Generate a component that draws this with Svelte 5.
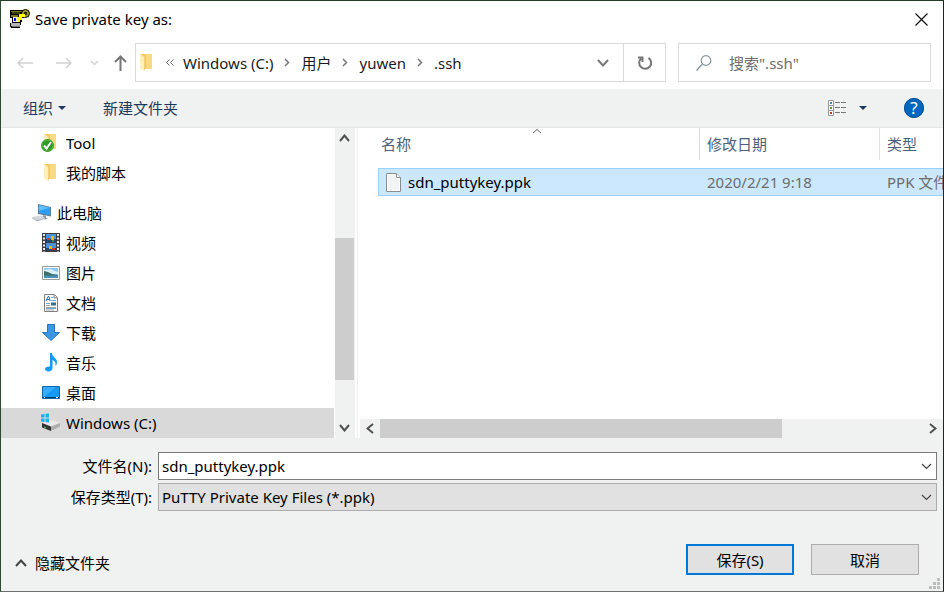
<script>
  const places = [
    { name: 'Tool', icon: 'synced', level: 1 },
    { name: '我的脚本', icon: 'folder', level: 1 },
    { name: '此电脑', icon: 'pc', level: 0 },
    { name: '视频', icon: 'video', level: 1 },
    { name: '图片', icon: 'picture', level: 1 },
    { name: '文档', icon: 'document', level: 1 },
    { name: '下载', icon: 'download', level: 1 },
    { name: '音乐', icon: 'music', level: 1 },
    { name: '桌面', icon: 'desktop', level: 1 },
    { name: 'Windows (C:)', icon: 'drive', level: 1 }
  ];
  const crumbs = ['Windows (C:)', '用户', 'yuwen', '.ssh'];
  const files = [{ name: 'sdn_puttykey.ppk', date: '2020/2/21 9:18', type: 'PPK 文件' }];

  let place = $state('Windows (C:)');
  let fileName = $state('sdn_puttykey.ppk');
</script>

{#snippet chevron(dir, w, h, sw)}
  <svg width={w} height={h} viewBox="0 0 {w} {h}" fill="none" stroke="currentColor" stroke-width={sw} aria-hidden="true">
    {#if dir === 'down'}<path d="M1 1L{w / 2} {h - 1.5}L{w - 1} 1" />
    {:else if dir === 'up'}<path d="M1 {h - 1}L{w / 2} 1.5L{w - 1} {h - 1}" />
    {:else if dir === 'left'}<path d="M{w - 1} 1L1.5 {h / 2}L{w - 1} {h - 1}" />
    {:else}<path d="M1 1L{w - 1.5} {h / 2}L1 {h - 1}" />{/if}
  </svg>
{/snippet}

{#snippet folderShape()}
  <path d="M4 1h11v15H6z" fill="#f3cb66" />
  <path d="M9 1h6v15H9z" fill="#f8da85" />
  <path d="M3 1l4 2.500V18l-4-2z" fill="#fff0bd" />
  <path d="M3 1h1.500L8 3.500V16.500L7 18V4z" fill="#f2cf7c" />
{/snippet}

{#snippet icon(kind)}
  <svg class="icon" width="20" height="20" viewBox="0 0 20 20" aria-hidden="true">
    {#if kind === 'folder'}
      {@render folderShape()}
    {:else if kind === 'synced'}
      {@render folderShape()}
      <circle cx="6.500" cy="12.500" r="6.500" fill="#2f9a26" />
      <circle cx="6.500" cy="12.500" r="5.500" fill="none" stroke="#55b845" />
      <path d="M3 12.500l2.500 3L10 9" fill="none" stroke="#fff" stroke-width="2" />
    {:else if kind === 'pc'}
      <path d="M6 1l13 3v9.500L6 11z" fill="#5b7f9c" />
      <path d="M7 2.300l11 2.500v7.400L7 9.800z" fill="#2a9df4" />
      <path d="M7 2.300l11 2.500-11 3z" fill="#5fc0ff" />
      <path d="M11 12l3 .7v2l2 .8-3 1-3-1z" fill="#8c9aa5" />
      <path d="M0 14l9-1.500 4 2.500-8 3z" fill="#d3d9de" />
      <path d="M0 14l5 3 8-2v.8L5 18.500 0 15z" fill="#aeb7bf" />
    {:else if kind === 'video'}
      <path d="M1 0h18v19H1z" fill="#3d3d3d" />
      <path d="M5 1h10v8H5zM5 10h10v8H5z" fill="#4d91d8" />
      <path d="M5 6h10v3H5zM5 15h10v3H5z" fill="#24476d" />
      <path d="M10 3h3v4h-3zM8 13h3v3H8z" fill="#e8b62c" />
      <path d="M6 5h3v2H6zM11 15h3v2h-3z" fill="#c7392e" />
      <path d="M11 7h2v2h-2z" fill="#4e8b36" />
      <path d="M3 1v18M17 1v18" stroke="#eee" stroke-width="2" stroke-dasharray="2 1.500" />
    {:else if kind === 'picture'}
      <path d="M1.500 3.500h17v13h-17z" fill="#fff" stroke="#9a9a9a" />
      <path d="M3 5h14v10H3z" fill="#8fc6ee" />
      <path d="M3 7l6-1 8 3v2H3z" fill="#dceffb" />
      <path d="M3 8l4 1 4 2 6 1v1H3z" fill="#3d7165" />
      <path d="M3 12.500h14V15H3z" fill="#4b91b7" />
    {:else if kind === 'document'}
      <path d="M3.500 1.500h10l3 3v14h-13z" fill="#fff" stroke="#808080" />
      <path d="M13 2v3h3" fill="#e8e8e8" stroke="#808080" />
      <path d="M5 8l2-4.500h1L9 8M6 6.500h3" fill="none" stroke="#1f78c8" />
      <path d="M10 4.500h2M10 7.500h5M5 10.500h4M5 15.500h10" stroke="#62a9de" />
      <path d="M5 12.500h4M5 14.500h10M5 17h8" stroke="#a5a5a5" />
      <path d="M10 9.500h5v3h-5z" fill="#36718b" />
    {:else if kind === 'download'}
      <path d="M6.500 1.500h7v8h5L10 17.500l-8.500-8h5z" fill="#3b97e3" stroke="#2675bd" />
    {:else if kind === 'music'}
      <path d="M9 0h2c0 4 5 5 5 9 0 2-1 4-1.500 4 .5-4-1-5-3-6v8c0 2-2 3.500-4 3.500S4 17.500 4 16s2-3 5-2.500z" fill="#189bf2" />
    {:else if kind === 'desktop'}
      <path d="M1.500 3.500h17v12h-17z" fill="#149bf5" stroke="#0b66ad" />
      <path d="M2 4h13L4 13H2z" fill="#37adff" />
      <path d="M2 14.500h16" stroke="#0c3a66" />
      <path d="M3 14.500h1M15 14.500h2" stroke="#fff" />
    {:else if kind === 'drive'}
      <path d="M1 10l9-3 9 3-9 4z" fill="#e9e9e9" />
      <path d="M1 10l9 3.500v4.500l-9-3.500z" fill="#343434" />
      <path d="M10 13.500l9-3.500v3.500l-9 4.500z" fill="#aeaeae" />
      <path d="M3 14l2 1" stroke="#60d55a" />
      <path d="M0 1.500l3.500-.5v3.500H0zM4.500.8L8 .4v4.100H4.500zM0 5.500h3.500V9L0 8.500zM4.500 5.500H8v4l-3.500-.4z" fill="#16b4ee" />
    {/if}
  </svg>
{/snippet}

<main class="dialog">
  <header class="title">
    <svg width="21" height="20" viewBox="0 0 21 20" aria-hidden="true">
      <path d="M1 1h14v8h-2v4h-1v3h-1v3H2l-1-2v-3h2V9H1z" fill="#000" />
      <path d="M2 2h11v1H2zM2 6h7v2H2z" fill="#77761b" />
      <path d="M3 3h8v2H3z" fill="#3d3c0b" />
      <path d="M4 8h6v5H4z" fill="#e8e8e8" />
      <path d="M5 9h2v3H5z" fill="#0016e8" />
      <path d="M2 14h9v3H2z" fill="#b5b5b5" />
      <path d="M3 17h8v1H3z" fill="#777" />
      <circle cx="16.500" cy="4.500" r="4" fill="#9b9a22" stroke="#000" />
      <path d="M15 3h3v3h-3z" fill="#29290a" />
      <path d="M10 5h6v3h-3v3h-2v2H9v-3H8V8h2z" fill="#ff0" />
    </svg>
    <h1>Save private key as:</h1>
    <button class="close" aria-label="Close">
      <svg width="13" height="13" viewBox="0 0 13 13" stroke="#111" stroke-width="1.200"><path d="M.5.5l12 12M12.500.5l-12 12" /></svg>
    </button>
  </header>

  <div class="nav">
    <div class="history">
      <button class="dim" aria-label="Back">
        <svg width="16" height="12" viewBox="0 0 16 12" fill="none" stroke="currentColor" stroke-width="1.500"><path d="M6 1L1 6l5 5M1 6h15" /></svg>
      </button>
      <button class="dim" aria-label="Forward">
        <svg width="16" height="12" viewBox="0 0 16 12" fill="none" stroke="currentColor" stroke-width="1.500"><path d="M10 1l5 5-5 5M15 6H0" /></svg>
      </button>
      <button class="dim recent" aria-label="Recent">{@render chevron('down', 9, 6, 1.5)}</button>
      <button class="up" aria-label="Up">
        <svg width="13" height="16" viewBox="0 0 13 16" fill="none" stroke="currentColor" stroke-width="2"><path d="M1 7l5.500-5.500L12 7M6.500 2v14" /></svg>
      </button>
    </div>
    <div class="address">
      <svg class="icon" width="20" height="20" viewBox="0 0 20 20" aria-hidden="true">{@render folderShape()}</svg>
      <button class="more" aria-label="More folders">
        <svg width="8" height="7" viewBox="0 0 8 7" fill="none" stroke="currentColor"><path d="M3.500.5l-3 3 3 3M7.500.5l-3 3 3 3" /></svg>
      </button>
      {#each crumbs as crumb, i}
        {#if i > 0}<span class="sep">{@render chevron('right', 6, 9, 1.5)}</span>{/if}
        <button class="crumb">{crumb}</button>
      {/each}
      <button class="drop" aria-label="Previous locations">{@render chevron('down', 12, 8, 2)}</button>
      <button class="refresh" aria-label="Refresh">
        <svg width="16" height="16" viewBox="0 0 16 16" fill="none" stroke="currentColor" stroke-width="2"><path d="M11.500 2.800A6 6 0 1 1 4 3.500M1 2.500h4.500V7" /></svg>
      </button>
    </div>
    <label class="search">
      <svg width="16" height="16" viewBox="0 0 16 16" fill="none" stroke="#84949a" stroke-width="1.200" aria-hidden="true"><circle cx="10" cy="5.500" r="4.800" /><path d="M6.500 9L.5 15.500" /></svg>
      <input type="search" aria-label="搜索" placeholder={'搜索".ssh"'} />
    </label>
  </div>

  <div class="toolbar">
    <button>组织 <i class="tri"></i></button>
    <button>新建文件夹</button>
    <button class="view" aria-label="View">
      <svg width="18" height="16" viewBox="0 0 18 16" aria-hidden="true">
        <path d="M.5.5h5v15h-5zM.5 5.500h5M.5 10.500h5" fill="#fff" stroke="#999" />
        <path d="M2 2h2v2H2z" fill="#3b86c8" /><path d="M2 7h2v2H2z" fill="#5a9a32" /><path d="M2 12h2v2H2z" fill="#c33a24" />
        <path d="M7 2.500h5M13 2.500h5M7 7.500h5M13 7.500h5M7 12.500h5M13 12.500h5" stroke="#777" />
      </svg>
      <i class="tri"></i>
    </button>
    <button class="help" aria-label="Help">?</button>
  </div>

  <div class="content">
    <aside>
      <ul>
        {#each places as p}
          <li class:root={p.level === 0}>
            <button class:selected={place === p.name} onclick={() => (place = p.name)}>
              {@render icon(p.icon)}<span>{p.name}</span>
            </button>
          </li>
        {/each}
      </ul>
      <div class="vbar">
        <button aria-label="Scroll up">{@render chevron('up', 11, 8, 2)}</button>
        <div class="track"><div class="thumb"></div></div>
        <button aria-label="Scroll down">{@render chevron('down', 11, 8, 2)}</button>
      </div>
    </aside>

    <section>
      <div class="list">
        <table>
          <thead>
            <tr>
              <th class="c-name"><span class="sort">{@render chevron('up', 10, 6, 1)}</span>名称</th>
              <th class="c-date">修改日期</th>
              <th class="c-type">类型</th>
            </tr>
          </thead>
          <tbody>
            {#each files as f}
              <tr>
                <td>
                  <div class="file">
                    <svg width="15" height="19" viewBox="0 0 15 19" aria-hidden="true"><path d="M.5.500h10l4 4v14H.5z" fill="#fff" stroke="#8c8c8c" /><path d="M2 2h8v4h3v11H2z" fill="#f1f3f4" /><path d="M10.500.5v4h4" fill="#fff" stroke="#8c8c8c" /></svg>
                    {f.name}
                  </div>
                </td>
                <td>{f.date}</td>
                <td>{f.type}</td>
              </tr>
            {/each}
          </tbody>
        </table>
      </div>
      <div class="hbar">
        <button aria-label="Scroll left">{@render chevron('left', 8, 11, 2)}</button>
        <div class="track"><div class="thumb"></div></div>
        <button aria-label="Scroll right">{@render chevron('right', 8, 11, 2)}</button>
      </div>
    </section>
  </div>

  <form onsubmit={(e) => e.preventDefault()}>
    <div class="fields">
      <label for="file-name">文件名(N):</label>
      <div class="field">
        <input id="file-name" type="text" bind:value={fileName} />
        <span class="arrow">{@render chevron('down', 11, 7, 1.2)}</span>
      </div>
      <label for="file-type">保存类型(T):</label>
      <div class="field">
        <select id="file-type"><option>PuTTY Private Key Files (*.ppk)</option></select>
        <span class="arrow">{@render chevron('down', 11, 7, 1.2)}</span>
      </div>
    </div>
    <footer>
      <button type="button" class="hide">{@render chevron('up', 12, 8, 2)}隐藏文件夹</button>
      <button type="submit" class="push primary">保存(S)</button>
      <button type="button" class="push">取消</button>
    </footer>
  </form>
  <svg class="grip" width="12" height="12" viewBox="0 0 12 12" fill="#bdbdbd" aria-hidden="true">
    <path d="M8 0h3v3H8zM8 4h3v3H8zM4 4h3v3H4zM8 8h3v3H8zM4 8h3v3H4zM0 8h3v3H0z" />
  </svg>
</main>

<style>
  :global(body) { margin: 0; }
  .dialog {
    position: relative;
    display: flex;
    flex-direction: column;
    box-sizing: border-box;
    min-height: 100vh;
    border: 1px solid;
    border-color: #26382a #1c2622 #6e6e6e #2c4a30;
    background: #fff;
    color: #000;
    font: 15px/20px "Noto Sans", "Noto Sans CJK SC", sans-serif;
  }
  button, input, select {
    margin: 0;
    padding: 0;
    border: 0;
    border-radius: 0;
    background: none;
    color: inherit;
    font: inherit;
  }
  button { display: flex; align-items: center; justify-content: center; white-space: nowrap; }
  svg { display: block; flex: none; }

  .title { display: flex; align-items: center; gap: 5px; height: 36px; padding: 0 15px 0 8px; }
  h1 { margin: 0; flex: 1; font-size: 15px; font-weight: 400; }

  .nav { display: flex; padding: 6px 12px 7px 0; }
  .history { display: flex; flex: none; padding-left: 4px; }
  .history button { width: 39px; color: #777; }
  .history .dim { color: #d2d2d2; }
  .history .recent { width: 22px; }
  .history .up { width: 30px; }
  .address {
    flex: 1;
    display: flex;
    align-items: center;
    height: 37px;
    padding-left: 1px;
    border: 1px solid #d9d9d9;
  }
  .more { width: 26px; color: #666; }
  .crumb { color: #1a1a1a; }
  .sep { display: flex; justify-content: center; width: 28px; color: #777; }
  .drop { width: 40px; margin-left: auto; color: #777; }
  .refresh { align-self: stretch; width: 42px; border-left: 1px solid #d9d9d9; color: #777; }
  .search {
    display: flex;
    align-items: center;
    gap: 17px;
    box-sizing: border-box;
    width: 253px;
    margin-left: 12px;
    padding: 0 17px;
    border: 1px solid #d9d9d9;
  }
  .search input { flex: 1; min-width: 0; outline: 0; appearance: none; }
  .search input::placeholder { color: #6d6d6d; opacity: 1; }

  .toolbar {
    display: flex;
    align-items: center;
    gap: 37px;
    height: 38px;
    padding: 0 19px 0 22px;
    border-bottom: 1px solid #e5e6e6;
    background: #f0f2f2;
    color: #1e395b;
  }
  .toolbar button { gap: 5px; }
  .tri { border: 4px solid transparent; border-top-color: #1e395b; border-bottom: 0; }
  .toolbar .view { gap: 13px; margin-left: auto; }
  .toolbar .help {
    width: 20px;
    height: 20px;
    border-radius: 50%;
    background: #0067c0;
    outline: 1px solid #0d4f8c;
    outline-offset: -1px;
    color: #fff;
    font-size: 17px;
  }

  .content { display: flex; }
  aside { display: flex; width: 354px; border-right: 2px solid #fff; }
  ul { flex: 1; margin: 0 1px 0 0; padding: 0; list-style: none; }
  li button { width: 100%; height: 30px; justify-content: flex-start; gap: 5px; padding-left: 40px; }
  li.root { padding-top: 10px; }
  li.root button { padding-left: 31px; }
  .selected { background: #d9d9d9; }
  .vbar { display: flex; flex-direction: column; width: 20px; background: #f0f2f2; color: #505050; }
  .vbar button { width: 19px; height: 20px; }
  .hbar button { width: 20px; height: 19px; }
  .track { flex: 1; }
  .vbar .thumb { width: 19px; height: 142px; margin-top: 90px; background: #cdcdcd; }

  section { flex: 1; min-width: 0; display: flex; flex-direction: column; border-left: 1px solid #f0f0f0; }
  .list { flex: 1; overflow: hidden; padding-left: 20px; }
  table { width: 700px; table-layout: fixed; border-collapse: separate; border-spacing: 0; }
  th { position: relative; height: 32px; padding: 0 7px; border-right: 1px solid #e0e0e0; color: #4c607a; font-weight: 400; text-align: left; }
  th.c-name { width: 318px; padding-left: 3px; padding-right: 0; }
  th.c-date { width: 165px; }
  .sort { position: absolute; top: 0; left: 50%; margin-left: -7px; color: #6b6b6b; }
  thead::after { content: ""; display: block; height: 8px; }
  td { height: 26px; padding: 0 7px; border: 1px solid #99d1ff; border-width: 1px 0; background: #cce8ff; color: #6d6d6d; white-space: nowrap; }
  td:first-child { border-left-width: 1px; color: #000; }
  .file { display: flex; align-items: center; gap: 7px; }
  .hbar { display: flex; height: 19px; margin-left: 2px; background: #f0f2f2; color: #505050; }
  .hbar .thumb { width: 74%; height: 19px; background: #cdcdcd; }

  form { flex: 1; display: flex; flex-direction: column; padding: 14px 6px 16px 14px; background: #f0f2f2; }
  .fields { display: grid; grid-template-columns: 137px 1fr; gap: 3px 6px; align-items: center; }
  .fields label { text-align: right; }
  .field { position: relative; }
  .field input, .field select {
    display: block;
    box-sizing: border-box;
    width: 100%;
    height: 28px;
    padding: 0 30px 0 3px;
    border: 1px solid #7a7a7a;
    background: #fff;
    appearance: none;
    outline: 0;
  }
  .field select { border-color: #adadad; background: #e1e1e1; }
  .arrow { position: absolute; top: 11px; right: 5px; color: #444; pointer-events: none; }
  footer { display: flex; align-items: center; gap: 17px; margin-top: auto; padding-right: 18px; }
  .hide { gap: 8px; margin-right: auto; padding-top: 7px; }
  .hide :global(svg) { color: #444; }
  .push { width: 108px; height: 31px; border: 1px solid #adadad; background: #e1e1e1; }
  .primary { border: 2px solid #0078d7; }
  .grip { position: absolute; right: 2px; bottom: 1px; }
</style>
